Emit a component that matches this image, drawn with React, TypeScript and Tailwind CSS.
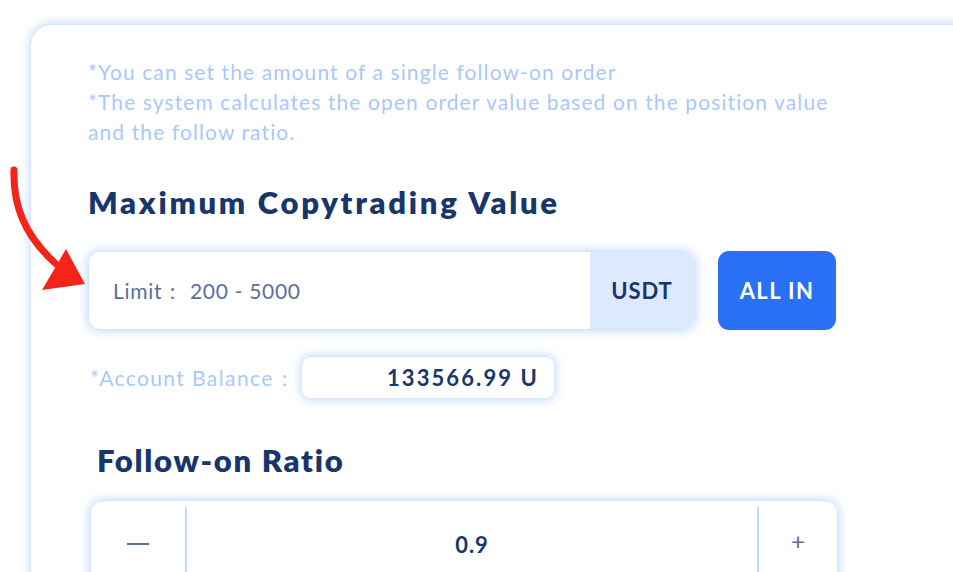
import React from "react";

const glow = "shadow-[0_0_8px_2px_rgba(168,196,255,0.55)]";

function RedArrow() {
  return (
    <svg
      className="absolute left-0 top-[160px]"
      width="100"
      height="140"
      viewBox="0 0 100 140"
    >
      <path
        d="M14 10 C13 45, 24 75, 56 104"
        fill="none"
        stroke="#f5241a"
        strokeWidth="7"
        strokeLinecap="round"
      />
      <polygon points="66,89 42,130 85,124" fill="#f5241a" />
    </svg>
  );
}

export default function App() {
  return (
    <div className="relative w-[953px] h-[572px] overflow-hidden bg-white font-['Lato',sans-serif]">
      <RedArrow />
      <div className="pl-[30px] pt-[24px]">
        <div
          className={`w-[960px] h-[600px] rounded-tl-[22px] border border-[#dbe7ff] bg-white ${glow} pl-[57px] pt-[32px]`}
        >
          {/* Notes */}
          <div className="text-[21px] leading-[30px] text-[#a9c8fb] tracking-[1.1px]">
            <p>*You can set the amount of a single follow-on order</p>
            <p>*The system calculates the open order value based on the position value</p>
            <p>and the follow ratio.</p>
          </div>

          {/* Maximum Copytrading Value */}
          <h2 className="mt-[37px] text-[31px] leading-[36px] font-extrabold text-[#17366b] tracking-[2.7px]">
            Maximum Copytrading Value
          </h2>

          <div className="mt-[31px] flex items-center gap-[23px]">
            <div
              className={`w-[607px] h-[79px] flex rounded-[12px] overflow-hidden border border-[#d6e4ff] ${glow}`}
            >
              <div className="flex-1 flex items-center pl-[24px] text-[21px] text-[#5b6f98] tracking-[0.7px]">
                Limit：&nbsp;200 - 5000
              </div>
              <div className="w-[104px] flex items-center justify-center bg-[#dde9fd] text-[22px] font-bold text-[#17366b] tracking-[0.9px]">
                USDT
              </div>
            </div>
            <button className="w-[118px] h-[79px] rounded-[11px] bg-[#2a70f4] text-white text-[22px] font-bold tracking-[1.4px]">
              ALL IN
            </button>
          </div>

          <div className="mt-[26px] flex items-center">
            <span className="w-[211px] ml-[2px] text-[21px] text-[#a9c8fb] tracking-[1.4px] whitespace-nowrap">
              *Account Balance：
            </span>
            <div
              className={`w-[254px] h-[43px] flex items-center justify-end pr-[15px] rounded-[10px] border border-[#dbe7ff] ${glow} text-[22px] font-bold text-[#17366b] tracking-[2.1px]`}
            >
              133566.99 U
            </div>
          </div>

          {/* Follow-on Ratio */}
          <h2 className="mt-[43px] ml-[9px] text-[31px] leading-[36px] font-extrabold text-[#17366b] tracking-[1.7px]">
            Follow-on Ratio
          </h2>

          <div
            className={`mt-[22px] ml-[2px] w-[748px] h-[90px] flex rounded-t-[14px] border border-[#d6e4ff] ${glow}`}
          >
            <div className="w-[94px] flex items-start justify-center pt-[42px]">
              <span className="block w-[22px] h-[2px] bg-[#5b6f98]" />
            </div>
            <div className="w-[2px] mt-[6px] bg-[#c4d7fb]" />
            <div className="flex-1 flex items-start justify-center pt-[27px] text-[22px] font-bold text-[#17366b] tracking-[1px]">
              0.9
            </div>
            <div className="w-[2px] mt-[6px] bg-[#c4d7fb]" />
            <div className="w-[78px] flex items-start justify-center pt-[26px] text-[24px] leading-[28px] text-[#5b6f98]">
              +
            </div>
          </div>
        </div>
      </div>
    </div>
  );
}
